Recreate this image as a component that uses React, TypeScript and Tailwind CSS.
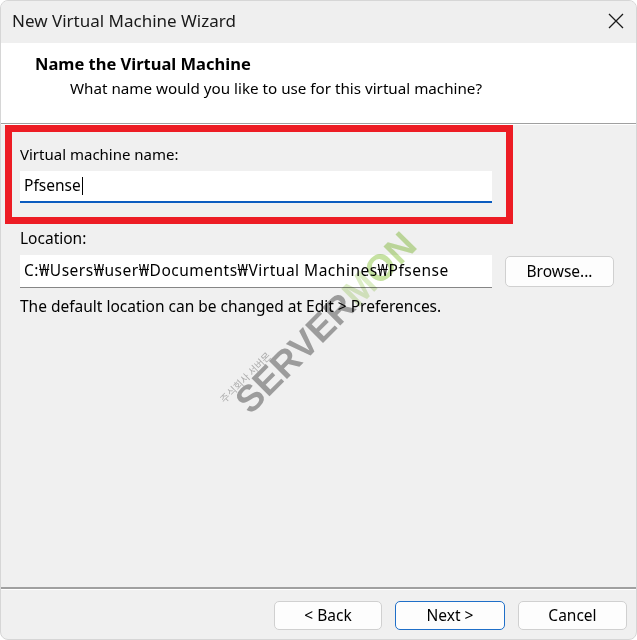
import React from "react";

export default function App() {
  const font = { fontFamily: '"Noto Sans", "Liberation Sans", sans-serif' };
  return (
    <div className="w-[637px] h-[640px] bg-white">
      <div
        className="relative w-[637px] h-[640px] bg-[#f0f0f0] flex flex-col rounded-[8px] overflow-hidden border border-[#d6d6d6] text-[#000]"
        style={font}
      >
        {/* Title bar */}
        <div className="h-[42px] shrink-0 bg-[#efefef] flex items-center justify-between pl-[11px] pr-[8px] pb-[2px]">
          <span className="text-[17px] text-[#1a1a1a]">New Virtual Machine Wizard</span>
          <svg width="22" height="22" viewBox="0 0 22 22" className="mr-[1px]">
            <path d="M4 4 L18 18 M18 4 L4 18" stroke="#1a1a1a" strokeWidth="1.3" />
          </svg>
        </div>
        {/* Header */}
        <div className="h-[80px] shrink-0 bg-white pl-[34px] pt-[10px]">
          <div className="text-[16.5px] font-bold leading-[22px]">Name the Virtual Machine</div>
          <div className="text-[15.2px] leading-[22px] pl-[35px] pt-[2px]">
            What name would you like to use for this virtual machine?
          </div>
        </div>
        <div className="h-[1px] shrink-0 bg-[#a0a0a0]" />
        <div className="h-[1px] shrink-0 bg-white" />
        {/* Body */}
        <div className="flex-1 flex flex-col pl-[4px]">
          <div className="w-[508px] h-[99px] border-[7px] border-[#ed1c24] pl-[8px] pt-[12px] flex flex-col">
            <span className="text-[15px] leading-[20px]">Virtual machine name:</span>
            <div className="mt-[7px] w-[472px] h-[32px] bg-white border-b-[2px] border-[#0a5bbf] flex items-center pl-[4px]">
              <span className="text-[15.5px]">Pfsense</span>
              <span className="w-[1px] h-[18px] bg-black ml-[1px]" />
            </div>
          </div>
          <div className="pl-[15px] pt-[3px] text-[15.5px] leading-[22px]">Location:</div>
          <div className="flex items-center pl-[15px] mt-[6px] gap-[13px]">
            <div className="w-[472px] h-[33px] bg-white border-b border-[#868686] flex items-center pl-[4px]">
              <span className="text-[15.5px] tracking-[0.5px]">C:₩Users₩user₩Documents₩Virtual Machines₩Pfsense</span>
            </div>
            <div className="w-[109px] h-[31px] bg-[#fdfdfd] border border-[#d0d0d0] rounded-[5px] flex items-center justify-center text-[15.5px]">
              Browse...
            </div>
          </div>
          <div className="pl-[15px] pt-[7px] text-[15.5px] leading-[22px]">
            The default location can be changed at Edit &gt; Preferences.
          </div>
        </div>
        {/* Footer */}
        <div className="h-[2px] shrink-0 bg-[#a0a0a0]" />
        <div className="h-[1px] shrink-0 bg-white" />
        <div className="h-[49px] shrink-0 flex justify-end items-start pt-[11px] pr-[9px] gap-[13px]">
          <div className="w-[108px] h-[29px] bg-[#fdfdfd] border border-[#d0d0d0] rounded-[5px] flex items-center justify-center text-[15.5px]">
            &lt; Back
          </div>
          <div className="w-[110px] h-[29px] bg-[#fdfdfd] border-[1.5px] border-[#1f6fc8] rounded-[5px] flex items-center justify-center text-[15.5px]">
            Next &gt;
          </div>
          <div className="w-[109px] h-[29px] bg-[#fdfdfd] border border-[#d0d0d0] rounded-[5px] flex items-center justify-center text-[15.5px]">
            Cancel
          </div>
        </div>
        {/* Watermark */}
        <div className="absolute left-[325px] top-[322px] -translate-x-1/2 -translate-y-1/2 -rotate-[45deg] pointer-events-none select-none whitespace-nowrap mix-blend-multiply">
          <span
            className="text-[37px] font-black tracking-[0px] leading-[38px]"
            style={{ fontFamily: '"Liberation Sans", sans-serif' }}
          >
            <span className="text-[#a6a6a6]">SERVER</span>
            <span className="text-[#dcedc6]">M</span>
            <span className="text-[#c6e2a2]">ON</span>
          </span>
        </div>
        <div
          className="absolute left-[244px] top-[376px] -translate-x-1/2 -translate-y-1/2 -rotate-[45deg] text-[10px] text-[#b8b8b8] pointer-events-none whitespace-nowrap mix-blend-multiply"
          style={{ fontFamily: '"Noto Sans CJK KR", sans-serif' }}
        >
          주식회사 서버몬
        </div>
      </div>
    </div>
  );
}
